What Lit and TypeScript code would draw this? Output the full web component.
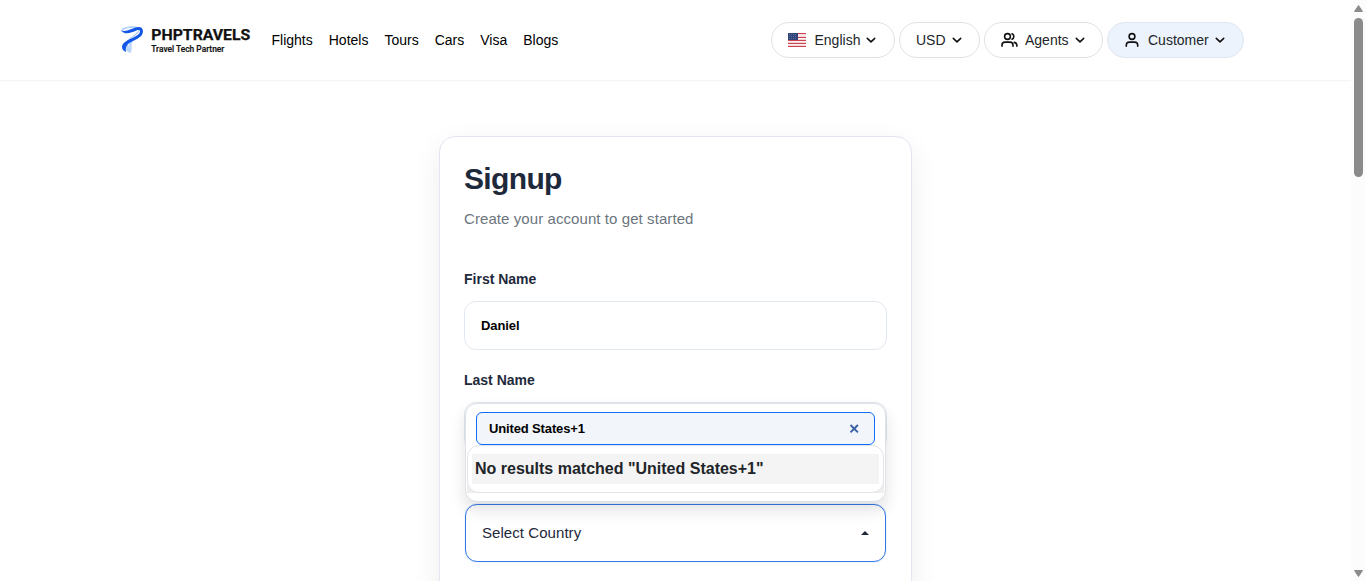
import { LitElement, html, css, svg } from "lit";
import { customElement } from "lit/decorators.js";

const chevron = html`<svg class="chev" width="14" height="14" viewBox="0 0 14 14" fill="none" stroke="currentColor" stroke-width="1.600" stroke-linecap="round" stroke-linejoin="round"><path d="m3.300 5.400 3.700 3.500 3.700-3.500"/></svg>`;

const flag = html`<svg class="flag" width="18" height="14" viewBox="0 0 18 14" shape-rendering="crispEdges">
  <rect width="18" height="14" fill="#f2d5d8"/>
  ${[0, 4, 7, 10, 13].map((y) => svg`<rect y=${y} width="18" height="1" fill="#cb4450"/>`)}
  ${[2, 5, 8, 11].map((y) => svg`<rect y=${y} width="18" height="1" fill="#f8f0f1"/>`)}
  <rect width="10" height="7" fill="#2f4379"/>
  ${[1, 3, 5].map((y) => [1, 3, 5, 7].map((x) => svg`<rect x=${x} y=${y} width="1" height="1" fill="#5c6b98"/>`))}
</svg>`;

@customElement("site-header")
class SiteHeader extends LitElement {
  static styles = css`
    :host { display: block; }
    header {
      box-sizing: border-box; height: 81px; display: flex; align-items: center;
      padding: 0 107px 1px 120px; border-bottom: 1px solid #f6f6f7;
      box-shadow: 0 1px 2px rgba(0, 0, 0, 0.02); background: #fff;
    }
    .logo { display: block; flex: none; }
    .brand { font-family: Roboto, sans-serif; font-weight: 700; fill: #111; stroke: #111; stroke-width: .25; }
    .tag { font-family: Roboto, sans-serif; font-weight: 500; fill: #111; stroke: #111; stroke-width: .2; }
    nav { display: flex; gap: 16px; margin-left: 19.5px; flex: 1; font-size: 14px; color: #000; }
    .actions { display: flex; gap: 4px; }
    .pill {
      box-sizing: border-box; height: 36px; border: 1px solid #dfe1e6; border-radius: 18px;
      display: flex; align-items: center; padding-left: 16px; font-size: 14px; color: #212529; background: #fff;
    }
    .lang { width: 124px; }
    .usd { width: 81px; }
    .agents { width: 119px; }
    .customer { width: 137px; background: #ecf3fc; border-color: #dfe6f0; }
    .flag { margin-right: 8.5px; }
    .icon { margin-right: 7px; color: #111; }
    .customer .icon { margin: 0 8px 0 -1px; }
    .chev { margin-left: 4px; color: #111; }
  `;
  render() {
    return html`<header>
      <svg class="logo" width="132" height="30" viewBox="0 0 132 30">
        <path d="M19 4.500C21 10 10 12 8.500 18C7.500 22 11.500 24.500 9.500 27.500C5.500 27 4.500 21 6.500 17C9 12 16 10 19 4.500Z" fill="#b9d6fa"/>
        <path d="M2 4.500C8 1.500 13 1 20 3.500" fill="none" stroke="#b9d6fa" stroke-width="2"/>
        <path d="M12 15.500C8 18.500 12.500 22 9.500 27.500" fill="none" stroke="#b9d6fa" stroke-width="2.500"/>
        <path d="M.8 5C5.500 7.500 11 4 15.500 2.500C19.500 1.200 23 2.300 23 6.300C22.800 13.500 13.500 14.800 8 19C5.500 21.500 5.500 24 6 27C2 25.500 .8 21.500 3.500 18.300C8 13.500 17.500 12.300 19.800 7.500C20.800 5.300 19 4.600 16.500 5.500C11.500 7.500 4.500 11 .8 5Z" fill="#1257e8"/>
        <text class="brand" x="31.300" y="15.300" font-size="15.500" textLength="99" lengthAdjust="spacingAndGlyphs">PHPTRAVELS</text>
        <text class="tag" x="31.300" y="27" font-size="8.500" textLength="73" lengthAdjust="spacingAndGlyphs">Travel Tech Partner</text>
      </svg>
      <nav>${["Flights", "Hotels", "Tours", "Cars", "Visa", "Blogs"].map((t) => html`<span>${t}</span>`)}</nav>
      <div class="actions">
        <div class="pill lang">${flag}<span>English</span>${chevron}</div>
        <div class="pill usd"><span>USD</span>${chevron}</div>
        <div class="pill agents">
          <svg class="icon" width="17" height="16" viewBox="0 0 17 16" fill="none" stroke="currentColor" stroke-width="1.600" stroke-linecap="round"><circle cx="6.500" cy="4.500" r="2.900"/><path d="M1 14.300V13a3 3 0 0 1 3-2.900h5a3 3 0 0 1 3 2.900v1.300M11 1.800a2.900 2.900 0 0 1 0 5.400M13.300 10.400a3.200 3.200 0 0 1 2.600 3v.9"/></svg>
          <span>Agents</span>${chevron}
        </div>
        <div class="pill customer">
          <svg class="icon" width="17" height="16" viewBox="0 0 17 16" fill="none" stroke="currentColor" stroke-width="1.600" stroke-linecap="round"><circle cx="9" cy="4.500" r="2.900"/><path d="M3.300 14.300V13a3 3 0 0 1 3-2.900h5.400a3 3 0 0 1 3 2.900v1.300"/></svg>
          <span>Customer</span>${chevron}
        </div>
      </div>
    </header>`;
  }
}

@customElement("signup-card")
class SignupCard extends LitElement {
  static styles = css`
    :host { display: block; }
    .card {
      box-sizing: border-box; width: 473px; height: 640px; padding: 24px; background: #fff;
      border: 1px solid #e2e6f0; border-radius: 16px; box-shadow: 0 10px 30px rgba(0, 0, 0, 0.07);
    }
    h1 { margin: 0; font-size: 30px; line-height: 36px; letter-spacing: -0.65px; color: #1e293b; }
    .sub { margin: 10px 0 0; font-size: 15px; letter-spacing: 0.08px; line-height: 24px; color: #6c757d; }
    label { display: block; font-size: 14px; font-weight: 700; line-height: 20px; color: #1e293b; }
    .first { margin-top: 38px; }
    .last { margin-top: 20px; }
    .input {
      box-sizing: border-box; height: 49px; margin-top: 12px; padding: 0 16px; border: 1px solid #e2e8f0;
      border-radius: 12px; display: flex; align-items: center; font-size: 13px; font-weight: 700; color: #000;
      letter-spacing: -0.1px;
    }
    .field { position: relative; height: 114px; }
    .menu {
      position: absolute; z-index: 2; left: 1px; top: 1px; width: 421px; height: 99px; box-sizing: border-box;
      border: 1px solid #dee2e6; border-radius: 12px; background: #fff; box-shadow: 0 8px 16px rgba(0, 0, 0, 0.12);
      padding: 8px 10px;
    }
    .search {
      box-sizing: border-box; height: 33px; border: 1px solid #0d6efd; border-radius: 6px; background: #f2f6fa;
      display: flex; align-items: center; justify-content: space-between; padding: 0 15px 0 12px;
      font-size: 13px; letter-spacing: -0.14px; font-weight: 700; color: #000;
    }
    .results {
      position: absolute; left: 1px; top: 41px; width: 417px; height: 48px; box-sizing: border-box;
      border: 1px solid #e2e4e8; border-radius: 12px; background: #fff; padding: 8px 4px;
    }
    .shade { position: absolute; left: 1px; top: 76px; width: 417px; height: 13px; background: #eee; }
    .none { background: #f4f4f4; height: 30px; line-height: 30px; padding-left: 3px; font-size: 16px; font-weight: 700; color: #212529; white-space: nowrap; }
    .select {
      box-sizing: border-box; height: 58px; margin: -12px 1px 0; padding: 0 16px; border: 1px solid #3478e5;
      border-radius: 12px; display: flex; align-items: center; justify-content: space-between;
      font-size: 15px; letter-spacing: 0.06px; color: #1e293b; box-shadow: 0 0 1px #7ba8ed;
    }
    .select span { padding-bottom: 2px; }
  `;
  render() {
    return html`<section class="card">
      <h1>Signup</h1>
      <p class="sub">Create your account to get started</p>
      <label class="first">First Name</label>
      <div class="input">Daniel</div>
      <label class="last">Last Name</label>
      <div class="field">
        <div class="input"></div>
        <div class="menu">
          <div class="search"><span>United States+1</span>
            <svg width="10" height="10" viewBox="0 0 10 10" stroke="#3b62a5" stroke-width="2"><path d="m1.500 1 7.400 7.400m0-7.400L1.500 8.400"/></svg>
          </div>
          <div class="shade"></div>
          <div class="results"><div class="none">No results matched "United States+1"</div></div>
        </div>
      </div>
      <div class="select"><span>Select Country</span>
        <svg width="8" height="4" viewBox="0 0 8 4"><path d="M0 4 4 0l4 4Z" fill="#1e293b"/></svg>
      </div>
    </section>`;
  }
}

@customElement("app-root")
class AppRoot extends LitElement {
  static styles = css`
    :host { display: flex; height: 581px; overflow: hidden; background: #fff; font-family: "Liberation Sans", Arial, sans-serif; }
    .page { flex: 1; min-width: 0; overflow: hidden; }
    signup-card { width: 473px; margin: 55px auto 0; }
    .bar { width: 15px; box-sizing: border-box; background: #fcfcfc; display: flex; flex-direction: column; align-items: center; padding: 5px 0 4px; }
    .thumb { width: 9px; height: 159px; border-radius: 5px; background: #8b8b8b; margin: 6px 0 auto; }
    .bar svg { flex: none; }
  `;
  render() {
    return html`<div class="page">
        <site-header></site-header>
        <signup-card></signup-card>
      </div>
      <div class="bar">
        <svg width="9" height="7" viewBox="0 0 9 7"><path d="M4.500.5 8.500 6.500h-8Z" fill="#8b8b8b" stroke="#8b8b8b" stroke-linejoin="round"/></svg>
        <div class="thumb"></div>
        <svg width="9" height="7" viewBox="0 0 9 7"><path d="M4.500 6.500 8.500.5h-8Z" fill="#8b8b8b" stroke="#8b8b8b" stroke-linejoin="round"/></svg>
      </div>`;
  }
}
